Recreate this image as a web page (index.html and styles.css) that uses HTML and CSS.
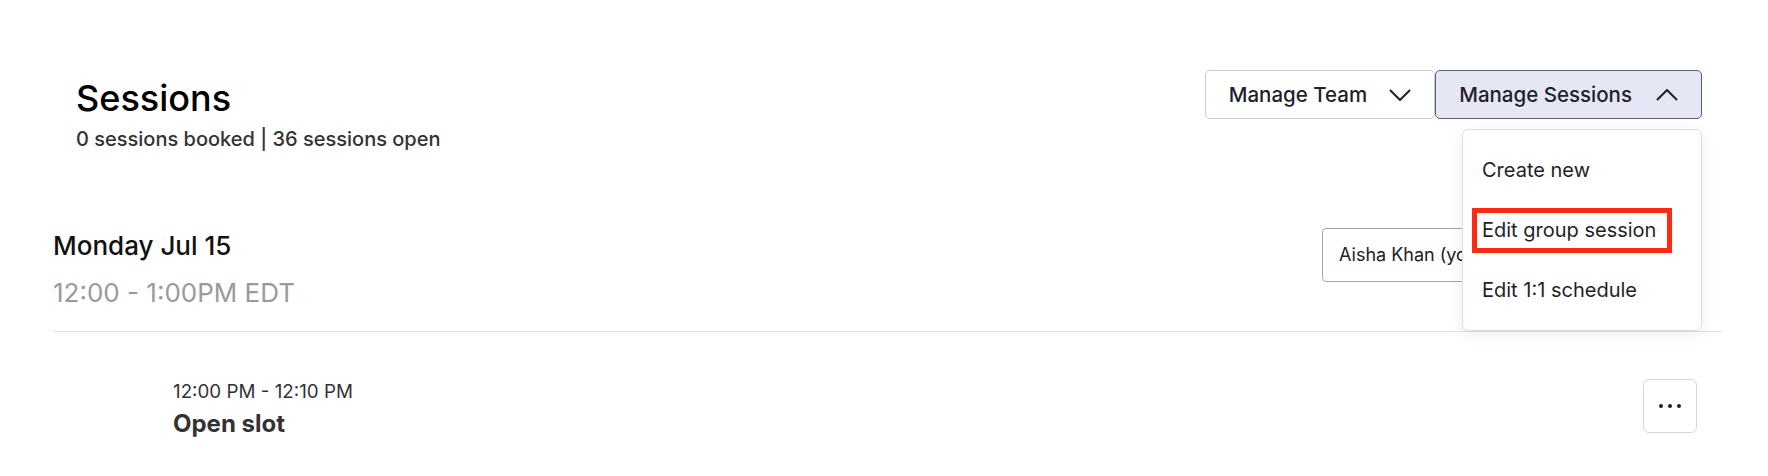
FILE: index.html
```html
<!DOCTYPE html>
<html lang="en">
<head>
  <meta charset="UTF-8">
  <title>Sessions</title>
  <link rel="stylesheet" href="styles.css">
</head>
<body>
  <div class="page">
    <div class="header">
      <div class="title-block">
        <h1>Sessions</h1>
        <p class="summary">0 sessions booked | 36 sessions open</p>
      </div>
      <div class="actions">
        <button class="btn">
          Manage Team
          <svg class="chev" width="22" height="12" viewBox="0 0 22 12"><path d="M1 1l10 10 10-10" fill="none" stroke="#1f1f2b" stroke-width="2"/></svg>
        </button>
        <div class="menu-wrap">
          <button class="btn btn-active">
            Manage Sessions
            <svg class="chev" width="22" height="12" viewBox="0 0 22 12"><path d="M1 11l10-10 10 10" fill="none" stroke="#1f1f2b" stroke-width="2"/></svg>
          </button>
          <div class="menu">
            <div class="menu-item">Create new</div>
            <div class="menu-item">Edit group session<span class="highlight"></span></div>
            <div class="menu-item">Edit 1:1 schedule</div>
          </div>
        </div>
      </div>
    </div>

    <div class="day">
      <div class="day-info">
        <div class="day-name">Monday Jul 15</div>
        <div class="day-range">12:00 - 1:00PM EDT</div>
      </div>
      <div class="host-select">Aisha Khan (you)</div>
    </div>

    <div class="slot">
      <div class="slot-info">
        <div class="slot-time">12:00 PM - 12:10 PM</div>
        <div class="slot-title">Open slot</div>
      </div>
      <button class="more">
        <span class="dot"></span><span class="dot"></span><span class="dot"></span>
      </button>
    </div>
  </div>
</body>
</html>
```

FILE: styles.css
```css
body {
  margin: 0;
  font-family: Inter, 'Noto Sans', sans-serif;
  background: #fff;
  color: #111;
}
.page {
  padding: 0 46px 0 53px;
}
.header {
  display: flex;
  justify-content: space-between;
  align-items: flex-start;
  padding: 70px 20px 0 23px;
}
.title-block {
  margin-top: 6px;
}
h1 {
  margin: 0;
  font-size: 36px;
  line-height: 44px;
  font-weight: 500;
  color: #000;
}
.summary {
  margin: 7px 0 0;
  font-size: 20px;
  line-height: 24px;
  font-weight: 500;
  color: #333;
}
.actions {
  display: flex;
}
.btn {
  display: flex;
  align-items: center;
  gap: 22px;
  height: 49px;
  padding: 0 23px 0 23px;
  font-family: inherit;
  font-size: 20.5px;
  font-weight: 500;
  color: #1f1f2b;
  background: #fff;
  border: 1px solid #c9c9d9;
  border-radius: 5px;
}
.btn-active {
  background: #e6e7f5;
  border-color: #5d5d78;
  gap: 24px;
  padding-left: 23px;
}
.menu-wrap {
  position: relative;
}
.menu {
  position: absolute;
  top: calc(100% + 10px);
  right: 0;
  width: 238px;
  padding: 10px 0;
  background: #fff;
  border: 1px solid #dcdcef;
  border-radius: 6px;
  box-shadow: 0 4px 16px rgba(0, 0, 0, 0.07);
  z-index: 2;
}
.menu-item {
  position: relative;
  height: 60px;
  line-height: 60px;
  padding-left: 19px;
  font-size: 20px;
  color: #1f1f2b;
}
.highlight {
  position: absolute;
  left: 9px;
  top: 8px;
  width: 190px;
  height: 35px;
  border: 5px solid #fd2a13;
}
.day {
  display: flex;
  justify-content: space-between;
  align-items: flex-start;
  margin-top: 77px;
  padding-bottom: 22px;
  border-bottom: 1px solid #e0e0e0;
  padding-right: 20px;
}
.day-info {
  padding-top: 3px;
}
.day-name {
  font-size: 26px;
  line-height: 30px;
  font-weight: 500;
  color: #111;
}
.day-range {
  margin-top: 16px;
  font-size: 26px;
  line-height: 32px;
  color: #9a9a9a;
}
.host-select {
  width: 346px;
  height: 52px;
  line-height: 52px;
  padding: 0 16px;
  font-size: 18px;
  color: #222;
  border: 1px solid #a5a5a5;
  border-radius: 4px;
}
.slot {
  display: flex;
  justify-content: space-between;
  align-items: flex-start;
  margin-top: 47px;
  padding-left: 120px;
  padding-right: 25px;
}
.slot-info {
  padding-top: 3px;
}
.slot-time {
  font-size: 18.8px;
  line-height: 20px;
  color: #333;
}
.slot-title {
  margin-top: 8px;
  font-size: 24px;
  line-height: 28px;
  font-weight: 700;
  color: #333;
}
.more {
  display: flex;
  align-items: center;
  justify-content: center;
  gap: 5px;
  width: 54px;
  height: 54px;
  padding: 0;
  background: #fff;
  border: 1px solid #d6d6d6;
  border-radius: 6px;
}
.dot {
  width: 4px;
  height: 4px;
  border-radius: 50%;
  background: #222;
}
```
